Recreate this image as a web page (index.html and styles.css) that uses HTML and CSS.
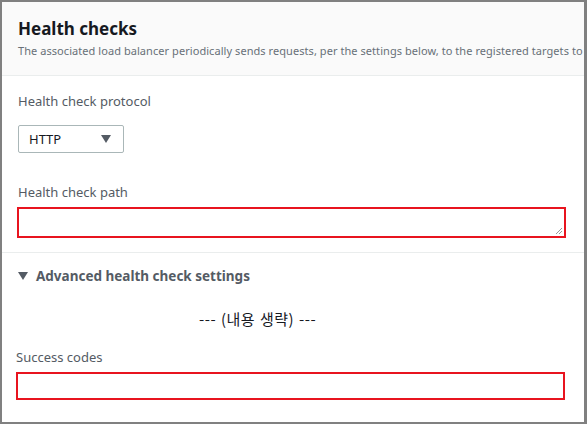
FILE: index.html
```html
<!DOCTYPE html>
<html>
<head>
<meta charset="utf-8">
<link rel="stylesheet" href="styles.css">
</head>
<body>
<div class="frame">
  <div class="header">
    <h2 class="title">Health checks</h2>
    <p class="desc">The associated load balancer periodically sends requests, per the settings below, to the registered targets to</p>
  </div>
  <div class="section">
    <div class="field">
      <div class="label">Health check protocol</div>
      <div class="select"><span>HTTP</span><span class="caret"></span></div>
    </div>
    <div class="field path">
      <div class="label">Health check path</div>
      <div class="textarea"><svg class="grip" width="8" height="8" viewBox="0 0 8 8"><path d="M7 1L1 7M7 4L4 7" stroke="#999" stroke-width="1" fill="none"/></svg></div>
    </div>
  </div>
  <div class="advanced">
    <div class="adv-head"><span class="adv-caret"></span>Advanced health check settings</div>
    <div class="omit">--- (내용 생략) ---</div>
    <div class="field codes">
      <div class="label">Success codes</div>
      <div class="input"></div>
    </div>
  </div>
</div>
</body>
</html>
```
FILE: styles.css
```css
* { box-sizing: border-box; }
html, body { margin: 0; padding: 0; background: #fff; }
body { font-family: "Noto Sans", "Noto Sans CJK KR", sans-serif; color: #16191f; }
.frame {
  width: 587px; height: 424px;
  border: 2px solid #808080; border-right-width: 3px;
  overflow: hidden; background: #fff;
}
.header {
  background: #fafafa;
  border-bottom: 1px solid #eaeded;
  height: 74px;
  padding: 16px 0 0 16px;
}
.title { margin: 0; font-size: 17px; font-weight: 700; line-height: 22px; color: #16191f; }
.desc {
  margin: 3px 0 0; font-size: 11px; line-height: 16px; color: #687078;
  white-space: nowrap; letter-spacing: 0.06px;
}
.section {
  padding: 16px 18px 14px 16px;
  border-bottom: 1px solid #eaeded;
}
.label { font-size: 13px; line-height: 18px; color: #545b64; }
.select {
  margin-top: 15px;
  width: 106px; height: 28px;
  border: 1px solid #aab7b8; border-radius: 2px;
  display: flex; align-items: center; justify-content: space-between;
  padding: 0 12px 0 10px;
  font-size: 13px; color: #16191f;
}
.caret {
  width: 0; height: 0;
  border-left: 5px solid transparent; border-right: 5px solid transparent;
  border-top: 8px solid #545b64;
}
.path { margin-top: 30px; }
.path .textarea {
  margin: 6px 0 0 -1px;
  height: 31px;
  border: 2px solid #e8141f;
  position: relative;
}
.grip { position: absolute; right: 1px; bottom: 1px; }
.advanced { padding: 13px 18px 0 16px; }
.adv-head {
  display: flex; align-items: center; gap: 8px;
  font-size: 13.5px; font-weight: 700; color: #545b64; line-height: 20px;
}
.adv-caret {
  width: 0; height: 0;
  border-left: 5px solid transparent; border-right: 5px solid transparent;
  border-top: 8px solid #545b64;
}
.omit {
  margin-top: 23px; padding-left: 181px;
  font-family: "Noto Sans CJK KR", sans-serif; font-size: 15px; line-height: 20px; color: #16191f;
  word-spacing: 1px; letter-spacing: 0.5px;
}
.codes { margin-top: 19px; margin-left: -2px; }
.codes .input {
  margin-top: 6px;
  height: 28px; width: 549px;
  border: 2px solid #e8141f;
}
```
